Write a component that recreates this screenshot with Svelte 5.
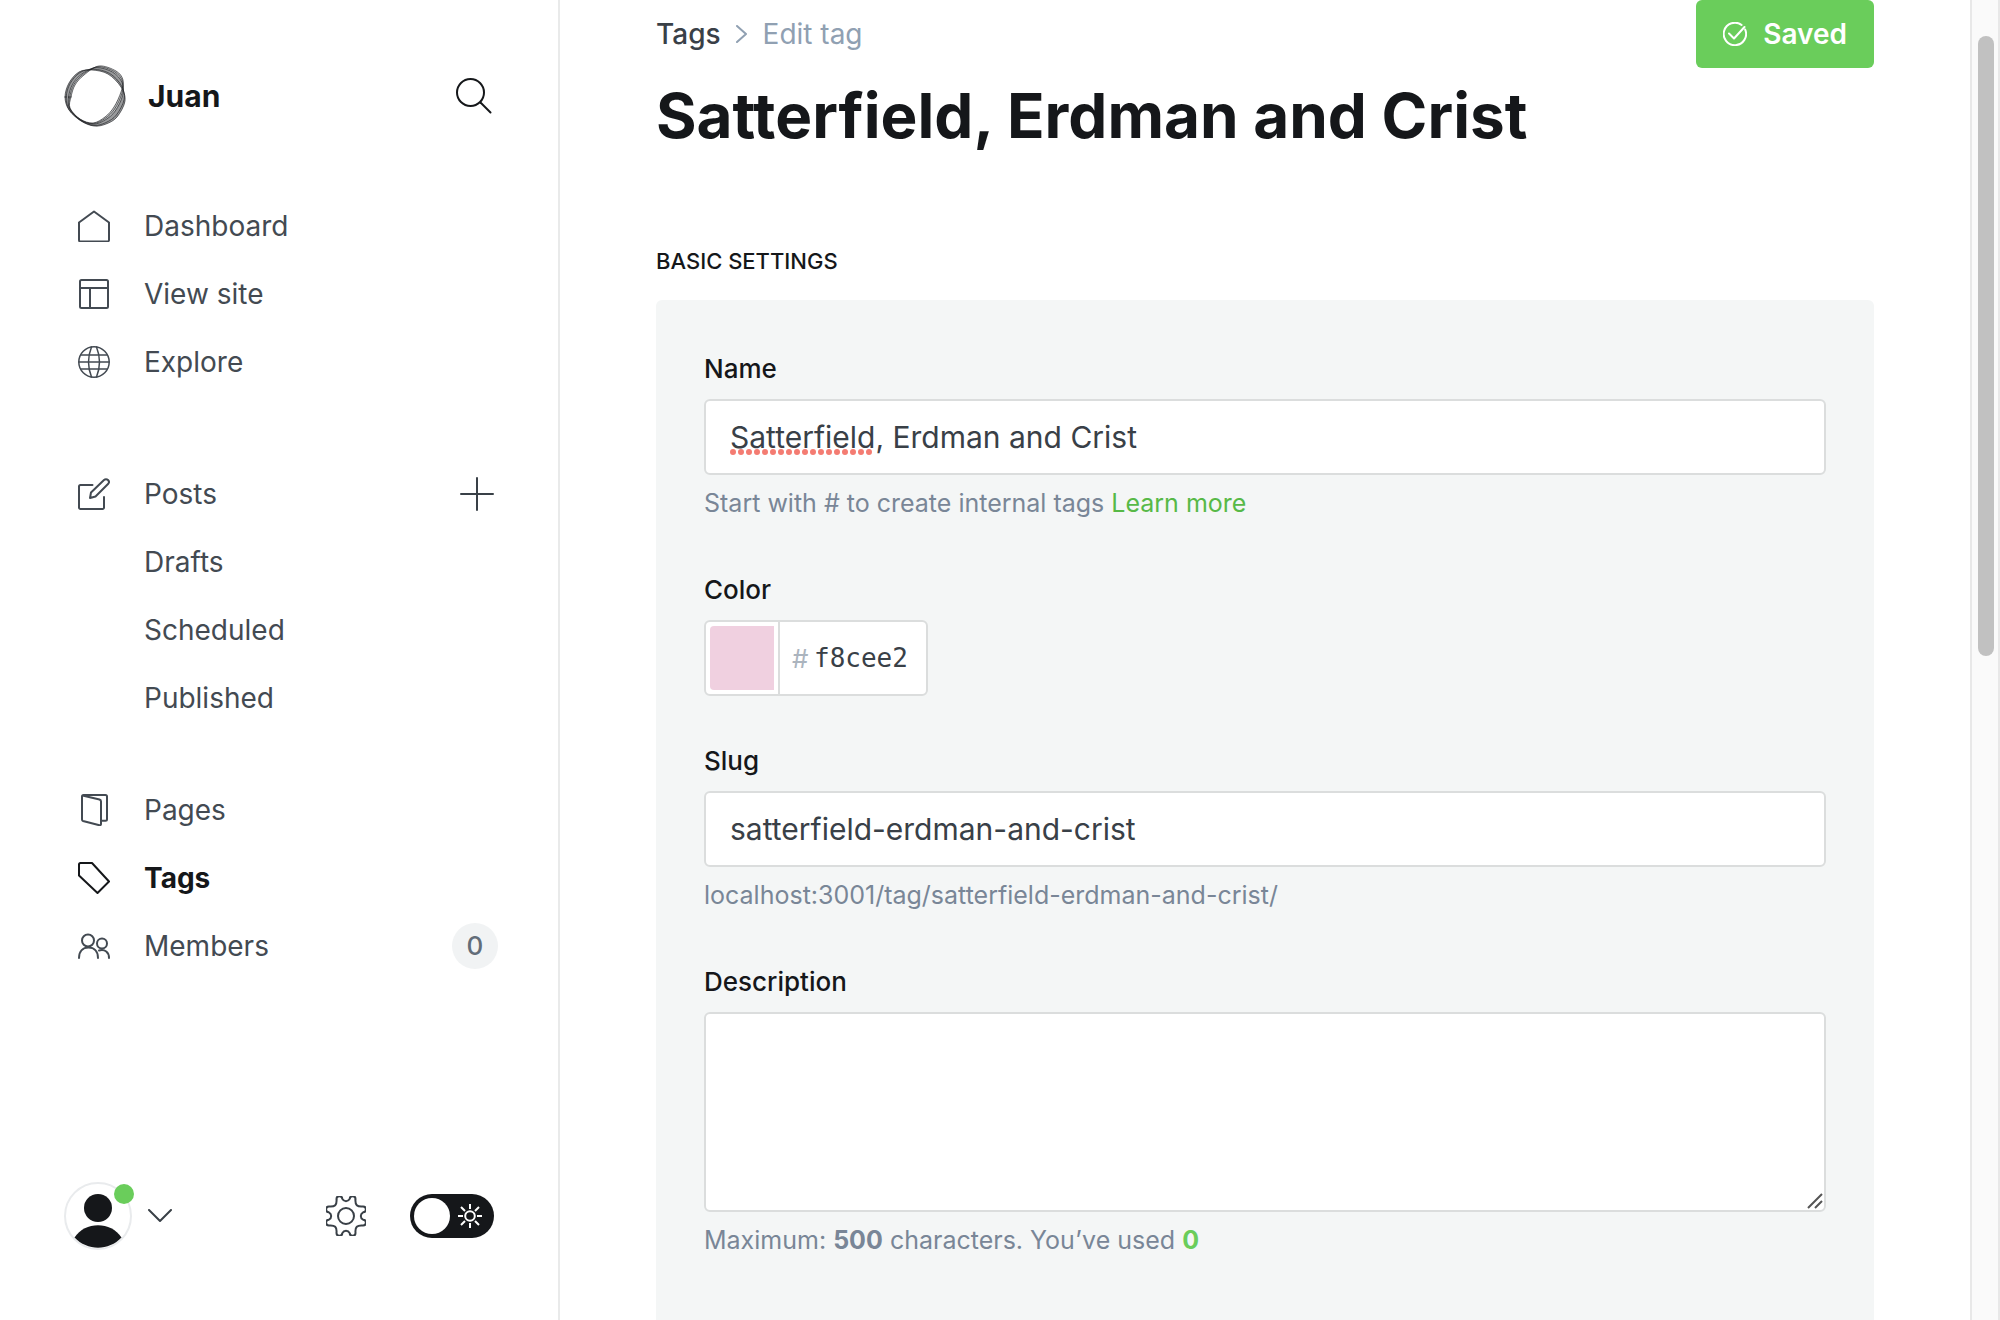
<script>
  let name = $state('Satterfield, Erdman and Crist');
  let color = $state('f8cee2');
  let slug = $state('satterfield-erdman-and-crist');
  let description = $state('');
  let dark = $state(false);

  // The site logo is a ribbon between two closed curves that cross each other.
  const round = [[1, 32], [5, 18], [15, 7], [28, 5], [44, 9], [57, 22], [61, 36], [53, 52], [42, 59], [30, 61], [17, 56], [5, 45]];
  const tilted = [[7, 32], [11, 20], [20, 10], [35, 1], [52, 6], [59, 15], [57, 27], [50, 42], [41, 52], [29, 58], [16, 54], [6, 43]];

  function loop(t) {
    const p = round.map(([x, y], i) => [x + (tilted[i][0] - x) * t, y + (tilted[i][1] - y) * t]);
    const n = p.length;
    let d = `M${p[0]}`;
    for (let i = 0; i < n; i++) {
      const a = p[(i + n - 1) % n], b = p[i], c = p[(i + 1) % n], e = p[(i + 2) % n];
      d += `C${b[0] + (c[0] - a[0]) / 6} ${b[1] + (c[1] - a[1]) / 6} ${c[0] - (e[0] - b[0]) / 6} ${c[1] - (e[1] - b[1]) / 6} ${c[0]} ${c[1]}`;
    }
    return d + 'Z';
  }
</script>

<div class="app">
  <aside class="sidebar">
    <header class="site">
      <svg class="logo" viewBox="0 0 62 62" aria-hidden="true">
        <path class="ribbon" d={loop(0) + loop(1)} />
        <path class="ribbon" d={loop(0) + loop(0.6)} />
        {#each [0, 0.2, 0.6, 0.8, 1] as t}
          <path d={loop(t)} />
        {/each}
      </svg>
      <strong class="site-name">Juan</strong>
      <button class="icon-btn" aria-label="Search">
        <svg width="36" height="36" viewBox="0 0 36 36" class="ink"><circle cx="14.500" cy="14.500" r="13.500" /><path d="m24.500 24.500 10 10" /></svg>
      </button>
    </header>

    <nav>
      <ul>
        <li><a href="#dashboard"><svg viewBox="0 0 32 32"><path d="M1 12.500 16 1.500l15 11V30a1.500 1.500 0 0 1-1.500 1.500h-27A1.500 1.500 0 0 1 1 30z" /></svg>Dashboard</a></li>
        <li><a href="#site"><svg viewBox="0 0 32 32"><rect x="2" y="2" width="28" height="28" rx="1.500" /><path d="M2 10h28M12 10v20" /></svg>View site</a></li>
        <li><a href="#explore"><svg viewBox="0 0 32 32" class="thin"><circle cx="16" cy="16" r="15.200" /><path d="M1 16h30M3 9h26M3 23h26M13.500 1c-4 10-4 20 0 30M18.500 1c4 10 4 20 0 30" /></svg>Explore</a></li>
      </ul>
      <ul>
        <li>
          <a href="#posts"><svg viewBox="0 0 32 32"><path d="M14.500 7H2.500A1.500 1.500 0 0 0 1 8.500v21A1.500 1.500 0 0 0 2.500 31h22a1.500 1.500 0 0 0 1.500-1.500V19M12 20l1-5.500L26 2a2.800 2.800 0 0 1 4 4L17.500 18.500z" /></svg>Posts</a>
          <button class="icon-btn add" aria-label="New post"><svg width="34" height="34" viewBox="0 0 34 34"><path d="M17 1v32M1 17h32" /></svg></button>
        </li>
        <li><a class="sub" href="#drafts">Drafts</a></li>
        <li><a class="sub" href="#scheduled">Scheduled</a></li>
        <li><a class="sub" href="#published">Published</a></li>
      </ul>
      <ul>
        <li><a href="#pages"><svg viewBox="0 0 32 32"><path d="M4 2.500Q4 1 5.500 1h22A1.500 1.500 0 0 1 29 2.500v22.800a1.500 1.500 0 0 1-1.500 1.500H23M4.500 1.500 21.500 5.500Q23 6 23 7.500V30q0 1.500-1.500 1.300L5 27q-1-.3-1-1.500V2.500" /></svg>Pages</a></li>
        <li><a class="active" aria-current="page" href="#tags"><svg viewBox="0 0 32 32"><path d="M2.500 1H14l17 18.500-11.500 11.500L1 13.500v-11A1.500 1.500 0 0 1 2.500 1z" /></svg>Tags</a></li>
        <li>
          <a href="#members"><svg viewBox="0 0 32 32"><circle cx="10" cy="10.500" r="6" /><path d="M1 28c0-7 4-10.500 9.500-10.500S20 21 20 28M21 20.500c6-1.500 10 1.500 10 7.500" /><circle cx="24" cy="13.500" r="5" /></svg>Members</a>
          <span class="count">0</span>
        </li>
      </ul>
    </nav>

    <footer class="tools">
      <button class="user" aria-label="Account menu">
        <span class="avatar">
          <svg width="68" height="68" viewBox="0 0 68 68"><circle cx="34" cy="34" r="33" fill="#fff" stroke="#e9ebed" stroke-width="2" /><g fill="#15171a"><circle cx="34" cy="26" r="14" /><path d="M10.500 55.500C21 39 47 39 57.500 55.500 45 69 23 69 10.500 55.500Z" /></g></svg>
          <span class="online"></span>
        </span>
        <svg width="24" height="14" viewBox="0 0 24 14" class="line"><path d="m1 1 11 11L23 1" /></svg>
      </button>
      <button class="icon-btn gear" aria-label="Settings">
        <svg width="40" height="40" viewBox="1 1 40 40" class="line"><circle cx="21" cy="21" r="8" /><path d="M17.300 3.900 Q18.500 6.200 21 6.200 Q23.500 6.200 24.700 3.900 A2.900 2.900 0 0 1 30.500 4.200 C30 10 32 12 37.800 11.500 A2.900 2.900 0 0 1 38.100 17.300 Q35.800 18.500 35.800 21 Q35.800 23.500 38.100 24.700 A2.900 2.900 0 0 1 37.800 30.500 C32 30 30 32 30.500 37.800 A2.900 2.900 0 0 1 24.700 38.100 Q23.500 35.800 21 35.800 Q18.500 35.800 17.300 38.100 A2.900 2.900 0 0 1 11.500 37.800 C12 32 10 30 4.200 30.500 A2.900 2.900 0 0 1 3.900 24.700 Q6.200 23.500 6.200 21 Q6.200 18.500 3.900 17.300 A2.900 2.900 0 0 1 4.200 11.500 C10 12 12 10 11.500 4.200 A2.900 2.900 0 0 1 17.300 3.900Z" /></svg>
      </button>
      <label class="switch">
        <input type="checkbox" bind:checked={dark} aria-label="Dark mode" />
        <svg width="24" height="24" viewBox="0 0 24 24"><circle cx="12" cy="12" r="4.800" /><path d="M12 0v5M12 19v5M0 12h5M19 12h5M3 3l4 4M17 17l4 4M21 3l-4 4M7 17l-4 4" /></svg>
      </label>
    </footer>
  </aside>

  <main>
    <header class="top">
      <div class="crumbs">
        <a href="#tags">Tags</a>
        <svg width="12" height="18" viewBox="0 0 12 18"><path d="m1 1 9 8-9 8" /></svg>
        <span>Edit tag</span>
      </div>
      <button class="save">
        <svg width="24" height="24" viewBox="0 0 24 24"><path d="M18.600 3A11.200 11.200 0 1 0 22.200 7.600M6 11.500l5 5L21.500 5" /></svg>
        Saved
      </button>
    </header>
    <h1>{name}</h1>

    <h2>Basic settings</h2>
    <form class="panel">
      <div class="field">
        <label for="name">Name</label>
        <div class="control">
          <input id="name" type="text" bind:value={name} spellcheck="false" />
          <svg class="spell" width="144" height="6" viewBox="0 0 144 6" aria-hidden="true"><path d="M3 3h137" /></svg>
        </div>
        <p>Start with # to create internal tags <a href="#learn">Learn more</a></p>
      </div>
      <div class="field">
        <label for="color">Color</label>
        <div class="color">
          <button type="button" class="swatch" aria-label="Pick a color"><span></span></button>
          <span class="hash">#</span>
          <input id="color" type="text" bind:value={color} spellcheck="false" />
        </div>
      </div>
      <div class="field">
        <label for="slug">Slug</label>
        <input id="slug" type="text" bind:value={slug} spellcheck="false" />
        <p>localhost:3001/tag/{slug}/</p>
      </div>
      <div class="field">
        <label for="description">Description</label>
        <div class="control">
          <textarea id="description" bind:value={description}></textarea>
          <svg class="grip" width="16" height="16" viewBox="0 0 16 16" aria-hidden="true"><path d="M1 15 15 1M8 15l7-7" /></svg>
        </div>
        <p>Maximum: <b>500</b> characters. You’ve used <b class="used">{description.length}</b></p>
      </div>
    </form>
  </main>

  <div class="scrollbar" aria-hidden="true"><span></span></div>
</div>

<style>
  :global(body) {
    font-family: Inter, "Liberation Sans", sans-serif;
    color: #15171a;
    background: #fff;
  }
  :global(*) { box-sizing: border-box; }
  .app {
    display: grid;
    grid-template-columns: 560px minmax(0, 1fr) 30px;
    height: 100vh;
    overflow: hidden;
  }
  a { color: inherit; text-decoration: none; }
  button, input, textarea { font: inherit; color: inherit; margin: 0; }
  button { background: none; border: 0; padding: 0; display: flex; align-items: center; cursor: pointer; }
  svg { display: block; flex: none; fill: none; stroke: currentColor; stroke-width: 2; stroke-linecap: round; stroke-linejoin: round; }
  .avatar svg { stroke: none; }

  .sidebar {
    display: flex;
    flex-direction: column;
    border-right: 2px solid #e9eaea;
    padding: 64px 64px 70px;
  }
  .site { display: flex; align-items: center; height: 64px; padding-right: 2px; }
  .logo { width: 62px; height: 62px; stroke-width: 1; stroke-opacity: 0.6; }
  .ribbon { fill: #15171a; fill-opacity: 0.25; fill-rule: evenodd; stroke: none; }
  .site-name { flex: 1; margin-left: 22px; font-size: 30px; line-height: 40px; font-weight: 700; }
  .ink { color: #15171a; }

  nav { flex: 1; margin-top: 64px; }
  ul { list-style: none; margin: 0 0 64px; padding: 0; }
  ul + ul { margin-bottom: 44px; }
  li { display: flex; align-items: center; height: 68px; color: #434a52; font-size: 28px; }
  li a { flex: 1; display: flex; align-items: center; gap: 34px; padding-left: 14px; }
  li a svg { width: 32px; height: 32px; }
  li .thin { stroke-width: 1.5; }
  li a.sub { padding-left: 80px; }
  li a.active { color: #15171a; font-weight: 700; }
  .add { color: #394047; }
  .count {
    min-width: 46px; height: 46px; border-radius: 23px; margin-right: -4px;
    background: #f1f3f4; color: #626d79; font-size: 26px; line-height: 46px; font-weight: 500; text-align: center;
  }

  .tools { display: flex; align-items: center; }
  .user { gap: 16px; flex: 1; color: #394047; }
  .avatar { position: relative; }
  .online { position: absolute; top: 2px; right: -2px; width: 20px; height: 20px; border-radius: 50%; background: #6acd5b; }
  .line { color: #394047; }
  .gear { margin-right: 44px; }
  .switch { position: relative; display: flex; cursor: pointer; }
  .switch input {
    appearance: none; width: 84px; height: 44px; border-radius: 22px; background: #15171a; display: flex; align-items: center; padding: 4px;
  }
  .switch input::before { content: ""; width: 36px; height: 36px; border-radius: 50%; background: #fff; }
  .switch input:checked { justify-content: flex-end; }
  .switch svg { position: absolute; right: 12px; top: 10px; color: #fff; stroke-linecap: butt; }

  main { padding: 0 96px; display: flex; flex-direction: column; overflow: hidden; }
  .top { display: flex; justify-content: space-between; height: 68px; flex: none; }
  .crumbs { display: flex; align-items: center; gap: 15px; font-size: 28px; line-height: 36px; color: #90a0b2; }
  .crumbs a { color: #394047; font-weight: 500; }
  .save {
    gap: 16px; padding: 0 27px; border-radius: 6px; background: #6acd5b; color: #fff;
    font-size: 28px; font-weight: 600;
  }
  h1 { margin: 8px 0 0; font-size: 62px; line-height: 80px; font-weight: 700; }
  h2 { margin: 91px 0 25px; font-size: 22px; line-height: 28px; font-weight: 500; text-transform: uppercase; }

  .panel { flex: none; background: #f4f6f6; border-radius: 6px; padding: 51px 48px 80px; display: flex; flex-direction: column; gap: 47px; }
  .field label { display: block; font-size: 26px; line-height: 36px; margin-bottom: 12px; font-weight: 500; }
  .field p { margin: 10px 0 4px; font-size: 25px; line-height: 36px; color: #798697; }
  .field p a { color: #57b947; }
  .field p b { font-weight: 700; }
  .field p .used { color: #6acd5b; }
  .control { position: relative; }
  input[type="text"], textarea {
    display: block; width: 100%; height: 76px; padding: 0 24px; font-size: 30px; color: #394047;
    border: 2px solid #dbdddd; border-radius: 6px; background: #fff; outline: none;
  }
  textarea { height: 200px; resize: none; padding: 16px 24px; }
  .spell { position: absolute; left: 26px; top: 50px; color: #f47c72; stroke-width: 6; stroke-dasharray: 0 8; }
  .grip { position: absolute; right: 3px; bottom: 3px; color: #555; stroke-linecap: butt; }
  .color {
    display: flex; align-items: center; width: 224px; height: 76px; border: 2px solid #dbdddd; border-radius: 6px; background: #fff;
  }
  .swatch { height: 100%; padding: 4px; border-right: 2px solid #dbdddd; }
  .swatch span { width: 64px; height: 64px; border-radius: 4px 0 0 4px; background: #f0d0e0; }
  .hash { margin-left: 12px; width: 22px; color: #abb4be; font-size: 26px; }
  .color input[type="text"] {
    flex: 1; min-width: 0; height: 100%; padding: 0; border: 0; font-family: "DejaVu Sans Mono", monospace; font-size: 26px;
  }

  .scrollbar { border: solid #e8e8e8; border-width: 0 2px; background: #fafafa; padding: 36px 4px 0 6px; }
  .scrollbar span { display: block; height: 47vh; border-radius: 8px; background: #c1c1c1; }
</style>
